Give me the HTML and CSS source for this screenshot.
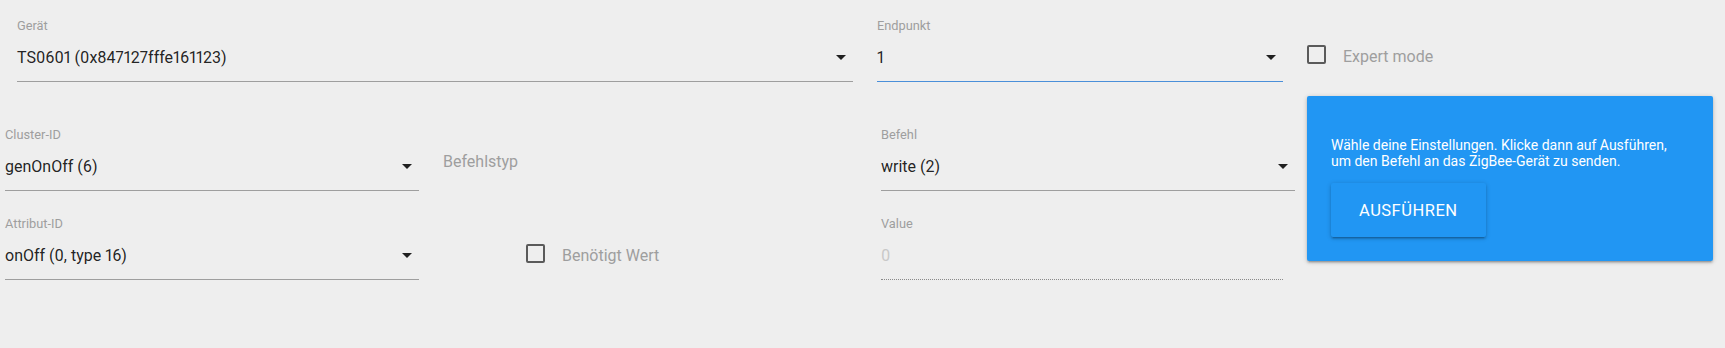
FILE: index.html
```html
<!DOCTYPE html>
<html lang="de">
<head>
    <meta charset="UTF-8">
    <meta name="viewport" content="width=device-width, initial-scale=1.0">
    <title>Dev Tools</title>
    <link rel="stylesheet" href="styles.css">
</head>
<body>

<div id="devTools">
    <div class="topRow">
        <div class="field deviceField">
            <label class="fieldLabel">Gerät</label>
            <div class="fieldValue">
                <span>TS0601 (0x847127fffe161123)</span>
                <svg class="caret" width="24" height="24" viewBox="0 0 24 24"><path d="M7 10l5 5 5-5z"/></svg>
            </div>
        </div>

        <div class="field endpointField">
            <label class="fieldLabel">Endpunkt</label>
            <div class="fieldValue focused">
                <span>1</span>
                <svg class="caret" width="24" height="24" viewBox="0 0 24 24"><path d="M7 10l5 5 5-5z"/></svg>
            </div>
        </div>

        <label class="check expertCheck">
            <span class="checkBox"></span>
            <span>Expert mode</span>
        </label>
    </div>

    <div class="lower">
        <div class="fieldGrid">
            <div class="field">
                <label class="fieldLabel">Cluster-ID</label>
                <div class="fieldValue">
                    <span>genOnOff (6)</span>
                    <svg class="caret" width="24" height="24" viewBox="0 0 24 24"><path d="M7 10l5 5 5-5z"/></svg>
                </div>
            </div>

            <div class="typeText">Befehlstyp</div>

            <div class="field">
                <label class="fieldLabel">Befehl</label>
                <div class="fieldValue">
                    <span>write (2)</span>
                    <svg class="caret" width="24" height="24" viewBox="0 0 24 24"><path d="M7 10l5 5 5-5z"/></svg>
                </div>
            </div>

            <div class="field">
                <label class="fieldLabel">Attribut-ID</label>
                <div class="fieldValue">
                    <span>onOff (0, type 16)</span>
                    <svg class="caret" width="24" height="24" viewBox="0 0 24 24"><path d="M7 10l5 5 5-5z"/></svg>
                </div>
            </div>

            <label class="check valueCheck">
                <span class="checkBox"></span>
                <span>Benötigt Wert</span>
            </label>

            <div class="field valueField">
                <label class="fieldLabel">Value</label>
                <div class="fieldValue disabled">
                    <span>0</span>
                </div>
            </div>
        </div>

        <div class="card">
            <p>Wähle deine Einstellungen. Klicke dann auf Ausführen, um den Befehl an das ZigBee-Gerät zu senden.</p>
            <button type="button" class="runButton">Ausführen</button>
        </div>
    </div>
</div>

</body>
</html>
```

FILE: styles.css
```css
body {
    margin: 0;
    background-color: #eeeeee;
    font-family: Roboto, "Liberation Sans", sans-serif;
    font-variant-numeric: proportional-nums;
    color: rgba(0, 0, 0, 0.87);
}

.topRow {
    display: flex;
    align-items: flex-start;
    padding: 19px 0 0 17px;
}

.field {
    display: flex;
    flex-direction: column;
}

.fieldLabel {
    font-size: 12.8px;
    line-height: 14px;
    color: #9e9e9e;
}

.fieldValue {
    height: 48px;
    display: flex;
    align-items: center;
    justify-content: space-between;
    font-size: 16px;
    border-bottom: 1px solid #9e9e9e;
}

.fieldValue.focused {
    border-bottom-color: #4a8fd9;
}

.fieldValue.disabled {
    color: #c8c8c8;
    border-bottom: 1px dotted rgba(0, 0, 0, 0.42);
}

.caret {
    flex-shrink: 0;
    fill: rgba(0, 0, 0, 0.87);
}

.deviceField {
    width: 836px;
}

.endpointField {
    width: 406px;
    margin-left: 24px;
}

.check {
    display: flex;
    align-items: flex-start;
    font-size: 16px;
    line-height: 25px;
    color: #9e9e9e;
}

.checkBox {
    width: 19px;
    height: 19px;
    box-sizing: border-box;
    border: 2px solid #5a5a5a;
    border-radius: 2px;
    margin: 1px 17px 0 0;
}

.expertCheck {
    margin: 25px 0 0 24px;
}

.lower {
    display: flex;
    align-items: flex-start;
    margin-top: 14px;
    padding-left: 5px;
}

.fieldGrid {
    display: grid;
    grid-template-columns: 414px 462px 414px;
    row-gap: 26px;
    padding-top: 32px;
}

.typeText {
    padding: 22px 0 0 24px;
    font-size: 16px;
    line-height: 24px;
    color: #9e9e9e;
}

.valueCheck {
    margin-top: 26px;
    padding-left: 107px;
}

.valueField {
    width: 402px;
}

.card {
    width: 406px;
    box-sizing: border-box;
    margin-left: 12px;
    padding: 24px;
    background-color: #2196f3;
    color: #fff;
    border-radius: 2px;
    box-shadow: 0 2px 2px 0 rgba(0, 0, 0, 0.14), 0 3px 1px -2px rgba(0, 0, 0, 0.12), 0 1px 5px 0 rgba(0, 0, 0, 0.2);
}

.card p {
    margin: 17px 0 14px;
    font-size: 14px;
    line-height: 16px;
}

.runButton {
    display: block;
    height: 54px;
    padding: 0 28px;
    border: none;
    border-radius: 2px;
    background-color: #2196f3;
    color: #fff;
    font-family: inherit;
    font-size: 16.5px;
    letter-spacing: 0.5px;
    text-transform: uppercase;
    cursor: pointer;
    box-shadow: 0 2px 2px 0 rgba(0, 0, 0, 0.14), 0 3px 1px -2px rgba(0, 0, 0, 0.12), 0 1px 5px 0 rgba(0, 0, 0, 0.2);
}
```
